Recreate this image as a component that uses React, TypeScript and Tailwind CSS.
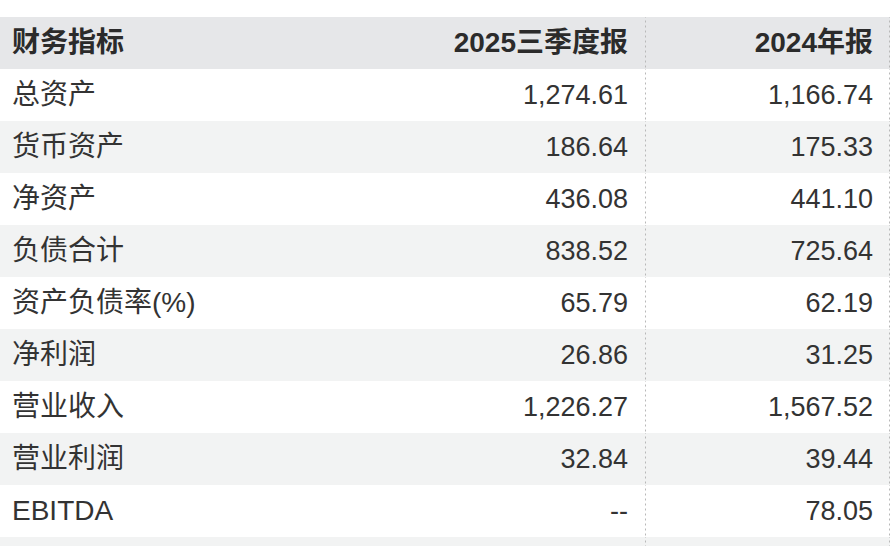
import React from 'react';

interface Row {
  name: string;
  q3: string;
  fy: string;
}

const rows: Row[] = [
  { name: '总资产', q3: '1,274.61', fy: '1,166.74' },
  { name: '货币资产', q3: '186.64', fy: '175.33' },
  { name: '净资产', q3: '436.08', fy: '441.10' },
  { name: '负债合计', q3: '838.52', fy: '725.64' },
  { name: '资产负债率(%)', q3: '65.79', fy: '62.19' },
  { name: '净利润', q3: '26.86', fy: '31.25' },
  { name: '营业收入', q3: '1,226.27', fy: '1,567.52' },
  { name: '营业利润', q3: '32.84', fy: '39.44' },
  { name: 'EBITDA', q3: '--', fy: '78.05' },
  { name: '', q3: '', fy: '' },
];

// dotted separator drawn on the right edge of a cell
const dash =
  'bg-[linear-gradient(to_bottom,#b8b8b8_40%,transparent_40%)] bg-[length:1px_5px] bg-right bg-repeat-y';

export default function App() {
  return (
    <div
      className="h-[546px] w-[890px] overflow-hidden bg-white pt-[17px] text-[#333]"
      style={{ fontFamily: '"Liberation Sans", "Noto Sans CJK SC", sans-serif' }}
    >
      <div className="grid grid-cols-[402px_244px_244px]">
        {/* header */}
        <div className="flex h-[52px] items-center bg-[#e6e7e9] pl-[12px] text-[28px] font-bold text-[#2b2b2b]">
          财务指标
        </div>
        <div
          className={`flex h-[52px] items-center justify-end bg-[#e6e7e9] pr-[18px] text-[28px] font-bold text-[#2b2b2b] ${dash}`}
        >
          2025三季度报
        </div>
        <div
          className={`flex h-[52px] items-center justify-end bg-[#e6e7e9] pr-[17px] text-[28px] font-bold text-[#2b2b2b] ${dash}`}
        >
          2024年报
        </div>

        {rows.map((r, i) => {
          const bg = i % 2 === 1 ? 'bg-[#f2f3f3]' : 'bg-white';
          return (
            <React.Fragment key={i}>
              <div className={`flex h-[52px] items-center pl-[12px] text-[28px] ${bg}`}>{r.name}</div>
              <div className={`flex h-[52px] items-center justify-end pr-[18px] text-[27px] ${bg} ${dash}`}>
                {r.q3}
              </div>
              <div className={`flex h-[52px] items-center justify-end pr-[17px] text-[27px] ${bg} ${dash}`}>
                {r.fy}
              </div>
            </React.Fragment>
          );
        })}
      </div>
    </div>
  );
}
